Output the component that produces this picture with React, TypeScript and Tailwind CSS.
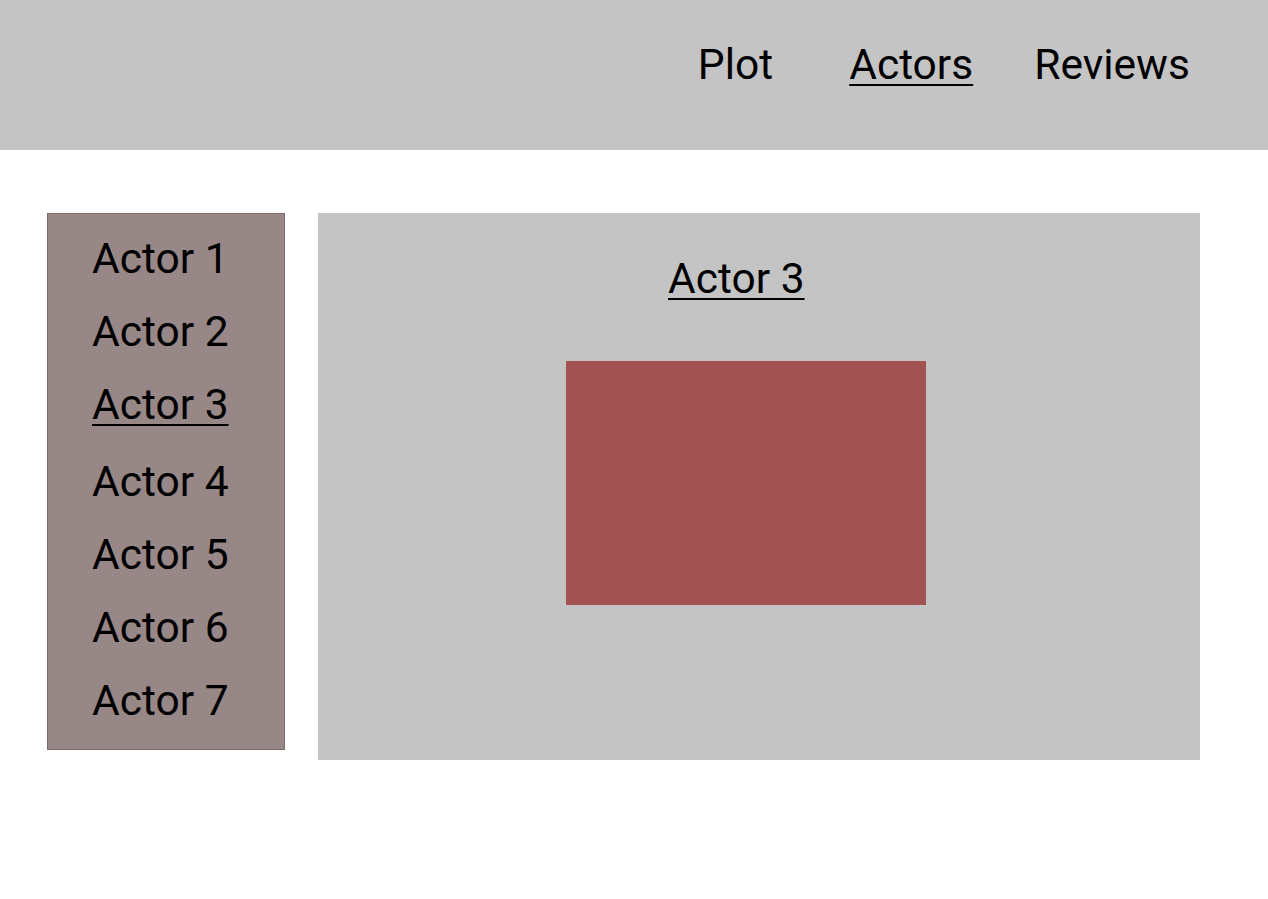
const actors = ['Actor 1', 'Actor 2', 'Actor 3', 'Actor 4', 'Actor 5', 'Actor 6', 'Actor 7'];

export default function App() {
  return (
    <div className="min-h-screen bg-white text-black font-['Roboto',sans-serif]">
      <header className="h-[150px] bg-[#c4c4c4] flex justify-end items-start pt-[43px] pr-[78px] text-[42.5px] leading-[43px]">
        <a className="mr-[76px]">Plot</a>
        <a className="mr-[61px] underline underline-offset-[5px] decoration-2">Actors</a>
        <a>Reviews</a>
      </header>

      <main className="flex items-start pt-[63px] pl-[47px]">
        <aside className="w-[238px] h-[537px] bg-[#978786] border border-[#7e6a6a] pt-[23px] pl-[44px] flex flex-col gap-[30px] text-[42.5px] leading-[43px]">
          {actors.map((name) => (
            <a
              key={name}
              className={
                name === 'Actor 3'
                  ? 'underline underline-offset-[5px] decoration-2'
                  : name === 'Actor 4'
                    ? 'mt-[4px]'
                    : ''
              }
            >
              {name}
            </a>
          ))}
        </aside>

        <section className="ml-[33px] w-[882px] h-[547px] bg-[#c4c4c4] pt-[44px]">
          <h2 className="pl-[350px] text-[42.5px] leading-[43px]">
            <span className="underline underline-offset-[5px] decoration-2">Actor 3</span>
          </h2>
          <div className="mt-[61px] ml-[248px] w-[360px] h-[244px] bg-[#a35252]" />
        </section>
      </main>
    </div>
  );
}
